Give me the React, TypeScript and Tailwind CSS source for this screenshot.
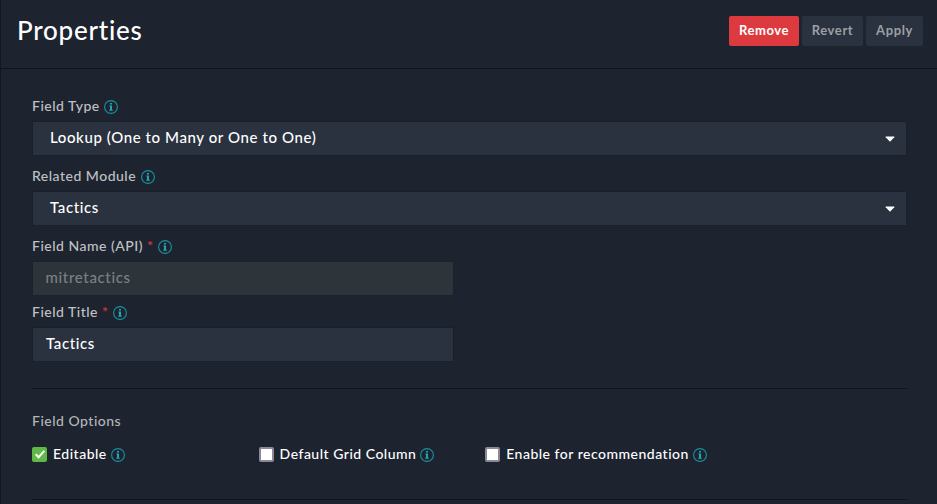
import type { ReactNode } from "react";

function Info() {
  return (
    <svg viewBox="0 0 14 14" className="size-3.5 shrink-0" fill="none">
      <circle cx="7" cy="7" r="6.4" stroke="#1b909d" strokeWidth="1.1" />
      <path d="M6 3h2v1.6H6zM5.4 5.6H8v4.1h.8v1H5.2v-1H6V6.5h-.6z" fill="#1ea6b3" />
    </svg>
  );
}

function Label({ children, required = false }: { children: ReactNode; required?: boolean }) {
  return (
    <div className="flex h-5 items-start text-[14px] leading-[19px] font-medium tracking-[0.5px] text-[#c0c1c2]">
      <span className="whitespace-nowrap">{children}</span>
      {required && <span className="ml-[4px] text-[#e0373d]">*</span>}
      <span className="mt-1 ml-[4.5px] flex">
        <Info />
      </span>
    </div>
  );
}

function Select({ value }: { value: string }) {
  return (
    <div className="flex h-[35px] items-center justify-between border border-[#1a212c] bg-[#2b323f] pr-[11px] pl-[17px] text-[15px] font-medium tracking-[0.6px] text-white">
      <span className="pb-[3px]">{value}</span>
      <svg viewBox="0 0 10 6" className="h-[6px] w-[10px]">
        <path d="M1 .5h8q.7.1.3.7L5.5 5.2q-.5.4-1 0L.7 1.2Q.3.6 1 .5z" fill="#fff" />
      </svg>
    </div>
  );
}

function Option({ label, checked = false }: { label: string; checked?: boolean }) {
  return (
    <div className="flex h-5 w-[226.6px] shrink-0 items-center whitespace-nowrap text-[14px] leading-5 font-medium tracking-[0.5px] text-white">
      {checked ? (
        <span className="flex size-[15px] shrink-0 items-center justify-center rounded-[2px] bg-[#5fb944]">
          <svg viewBox="0 0 12 12" className="size-3" fill="none">
            <path d="M1.7 6.3 4.6 9.2 10.3 2.8" stroke="#fff" strokeWidth="2" />
          </svg>
        </span>
      ) : (
        <span className="size-[15px] shrink-0 rounded-[2px] border-2 border-[#8b8998] bg-white" />
      )}
      <span className="ml-1.5">{label}</span>
      <span className="mt-[2px] ml-1 flex">
        <Info />
      </span>
    </div>
  );
}

export default function App() {
  return (
    <div className="h-[504px] w-[937px] overflow-hidden border-l border-[#121820] bg-[#1d2430] font-[Lato,sans-serif]">
      <header className="flex h-[69px] justify-between border-b border-[#10151b] pr-[14px] pl-4">
        <h1 className="mt-[11px] text-[26px] leading-[38px] font-medium tracking-[0.75px] text-white">Properties</h1>
        <div className="mt-4 flex h-[30px] gap-[3px] text-[13px] font-bold tracking-[0.6px]">
          <button className="w-[70px] rounded-[2px] bg-[#dc3a3f] text-white">Remove</button>
          <button className="w-[61px] rounded-[2px] bg-[#29323e] text-[#9c9fa4]">Revert</button>
          <button className="w-[57px] rounded-[2px] bg-[#29323e] text-[#9c9fa4]">Apply</button>
        </div>
      </header>
      <main className="pr-[30px] pl-[31px]">
        <section className="flex h-[320px] flex-col border-b border-[#10151b] pt-[27px]">
          <Label>Field Type</Label>
          <div className="mt-[5px]"><Select value="Lookup (One to Many or One to One)" /></div>
          <div className="mt-[10px]"><Label>Related Module</Label></div>
          <div className="mt-[5px]"><Select value="Tactics" /></div>
          <div className="mt-[10px]"><Label required>Field Name (API)</Label></div>
          <div className="mt-[5px] flex h-[35px] w-[422px] items-center border border-[#1b222c] bg-[#2d353b] pb-[2px] pl-[12.5px] text-[15px] font-medium tracking-[0.65px] text-[#7c8086]">mitretactics</div>
          <div className="mt-[6px]"><Label required>Field Title</Label></div>
          <div className="mt-[5px] flex h-[35px] w-[422px] items-center border border-[#1a212c] bg-[#2b323f] pb-[2px] pl-[13px] text-[15px] font-medium tracking-[0.6px] text-white">Tactics</div>
        </section>
        <section className="h-[111px] border-b border-[#10151b] pt-[22px]">
          <h2 className="text-[14px] leading-5 font-medium tracking-[0.5px] text-[#b4b6b8]">Field Options</h2>
          <div className="mt-[13px] flex">
            <Option label="Editable" checked />
            <Option label="Default Grid Column" />
            <Option label="Enable for recommendation" />
          </div>
        </section>
      </main>
    </div>
  );
}
